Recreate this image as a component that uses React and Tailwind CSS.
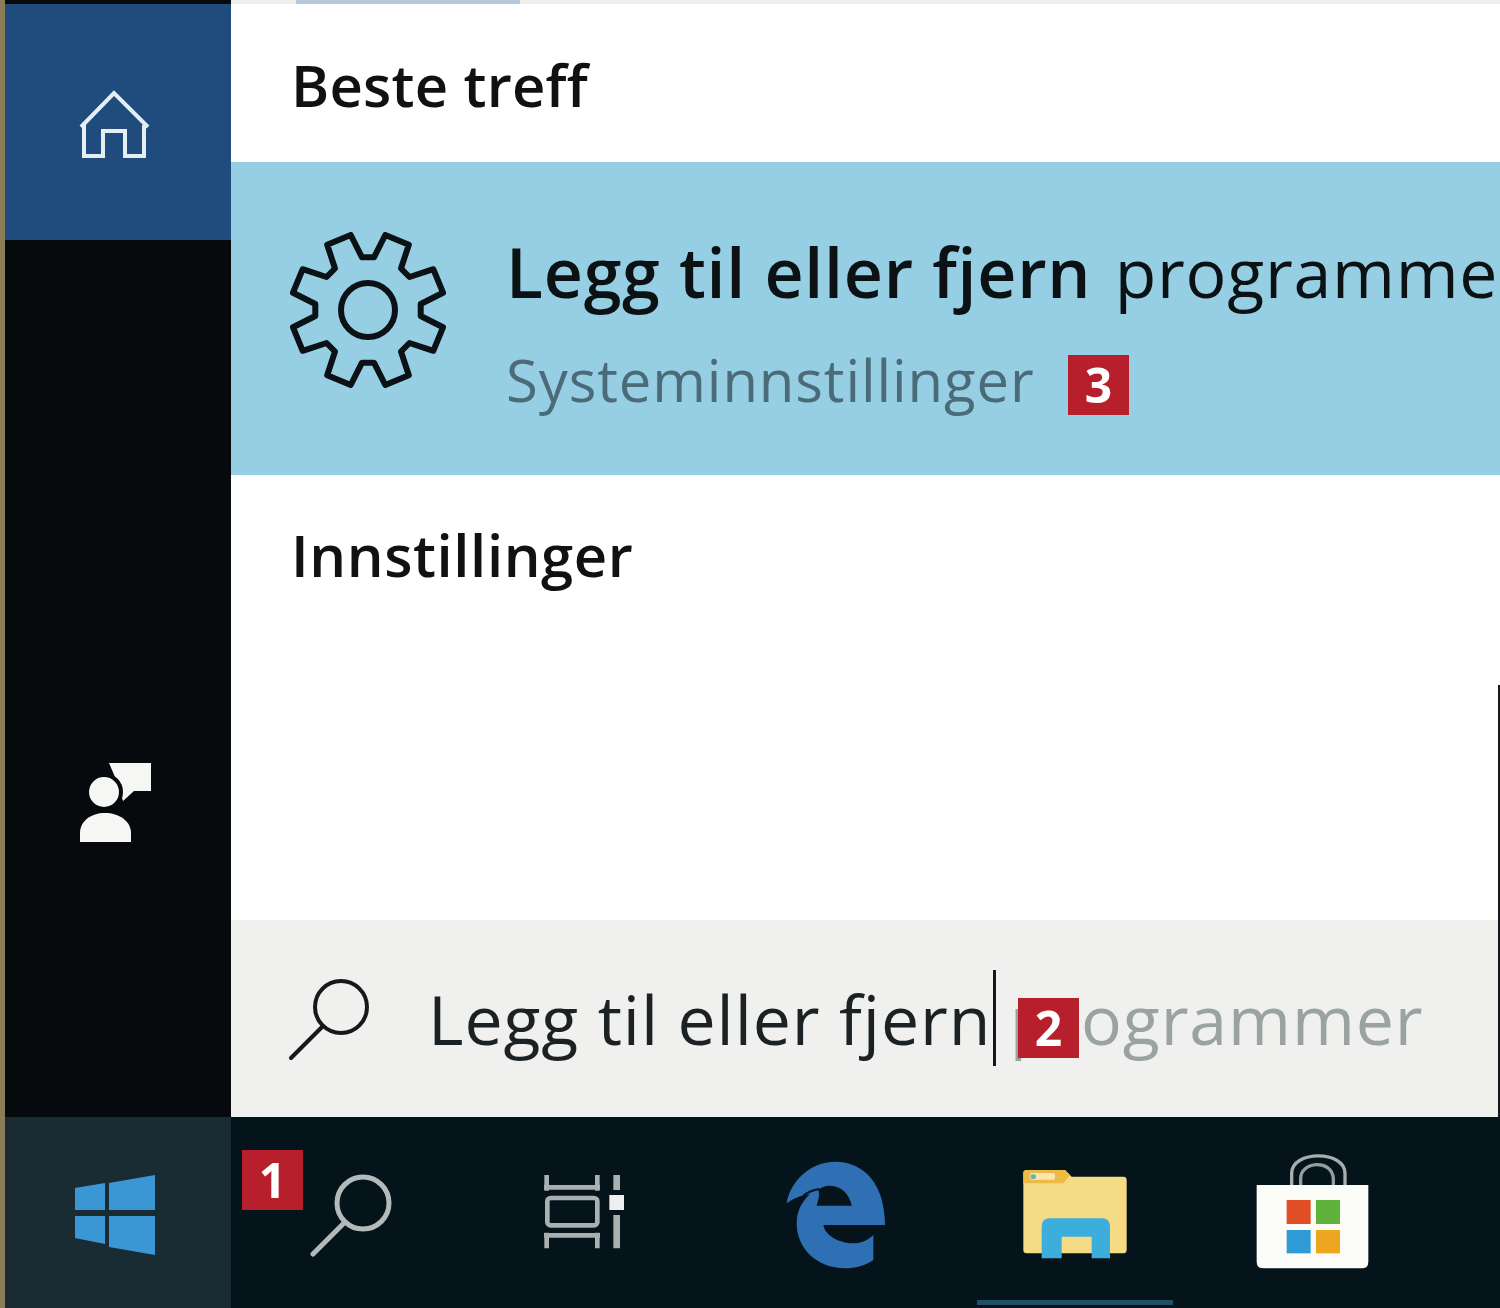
import React from 'react';

// 8-tooth settings gear, points worked out around the centre
function gearPoints(cx, cy, outer, inner) {
  const pts = [];
  for (let k = 0; k < 8; k++) {
    const a = 22.5 + 45 * k;
    [[-16, inner], [-9.5, outer], [9.5, outer], [16, inner]].forEach(([d, r]) => {
      const t = ((a + d - 90) * Math.PI) / 180;
      pts.push(`${(cx + r * Math.cos(t)).toFixed(1)},${(cy + r * Math.sin(t)).toFixed(1)}`);
    });
  }
  return pts.join(' ');
}

function Badge({ n, className }) {
  return (
    <div className={`absolute flex h-[60px] w-[61px] items-center justify-center bg-[#b81f2c] text-[48px] leading-none font-bold text-white ${className}`}>
      {n}
    </div>
  );
}

function HomeIcon() {
  return (
    <svg width="72" height="70" viewBox="0 0 72 70" fill="none" stroke="#e6eef5" strokeWidth="4">
      <path d="M2 37 L35 3 L69 37" />
      <path d="M5 35 V66 H24 V41 H46 V66 H65 V35" />
    </svg>
  );
}

function FeedbackIcon() {
  return (
    <svg width="72" height="80" viewBox="0 0 72 80">
      <path d="M30 0 H72 V28 H55 L44 38 L36 14 Z" fill="#f6f6f4" />
      <circle cx="25" cy="29" r="17" fill="#f6f6f4" stroke="#060a0c" strokeWidth="4" />
      <path d="M1 79 V70 C1 58 12 50 26 50 C40 50 52 58 52 70 V79 Z" fill="#f6f6f4" />
    </svg>
  );
}

function SearchGlyph({ color, size = 84, width = 4 }) {
  return (
    <svg width={size} height={size} viewBox="0 0 84 84" fill="none" stroke={color} strokeWidth={width}>
      <circle cx="54" cy="30" r="26" />
      <path d="M36 49 L4 81" strokeLinecap="round" />
    </svg>
  );
}

function WindowsLogo() {
  return (
    <svg width="80" height="80" viewBox="0 0 80 80" fill="#3a97d4">
      <path d="M0 13 L30 8 V35 H0 Z" />
      <path d="M34 8 L80 0 V35 H34 Z" />
      <path d="M0 41 H30 V69 L0 63 Z" />
      <path d="M34 41 H80 V80 L34 72 Z" />
    </svg>
  );
}

function TaskViewIcon() {
  return (
    <svg width="110" height="100" viewBox="0 0 330 300" fill="none" stroke="#a9b0b0" strokeWidth="14">
      <path d="M50 45 V92 M202 45 V92 M42 82 H210" />
      <rect x="52" y="114" width="150" height="82" rx="10" />
      <path d="M50 218 V265 M202 218 V265 M42 226 H210" />
      <path d="M260 45 V90 M260 165 V265" strokeWidth="20" />
      <rect x="238" y="105" width="44" height="45" fill="#eef0f0" stroke="none" />
    </svg>
  );
}

function EdgeIcon() {
  return (
    <svg width="130" height="135" viewBox="0 0 390 405">
      <path
        fill="#2f70b4"
        fillRule="evenodd"
        d="M50 175 C60 110 120 50 195 50 C285 50 345 120 345 240 H160 C165 270 205 295 250 295 C275 295 295 285 310 270 V345 C285 362 255 370 225 370 C140 370 80 310 80 235 C80 200 95 170 120 148 C90 150 65 165 50 175 Z M140 182 H245 C240 150 215 122 180 122 C165 122 150 128 145 135 C150 150 145 165 140 182 Z"
      />
      <path d="M148 132 C130 135 112 142 100 152" fill="none" stroke="#04141a" strokeWidth="6" />
    </svg>
  );
}

function FolderIcon() {
  return (
    <svg width="130" height="115" viewBox="0 0 390 345">
      <path d="M40 55 Q40 45 50 45 H165 L185 65 H340 Q350 65 350 75 V285 Q350 295 340 295 H50 Q40 295 40 285 Z" fill="#f6db86" />
      <path d="M40 55 Q40 45 50 45 H165 L180 60 L160 85 H40 Z" fill="#edba44" />
      <rect x="60" y="54" width="75" height="20" rx="6" fill="#f8e6ad" />
      <rect x="62" y="58" width="16" height="14" rx="5" fill="#5fb7b8" />
      <path d="M95 215 Q95 190 120 190 H275 Q300 190 300 215 V310 H245 V245 H155 V310 H95 Z" fill="#3caedb" />
    </svg>
  );
}

function StoreIcon() {
  return (
    <svg width="150" height="135" viewBox="0 0 450 405" fill="none">
      <path d="M155 125 V85 C155 15 315 15 315 85 V125" stroke="#a8aeae" strokeWidth="10" />
      <path d="M182 125 V100 C182 50 275 40 280 100 V125" stroke="#969d9d" strokeWidth="10" />
      <path d="M50 120 H385 V350 Q385 370 365 370 H70 Q50 370 50 350 Z" fill="#fbfbf8" />
      <rect x="140" y="165" width="72" height="72" fill="#e04e26" />
      <rect x="228" y="165" width="72" height="72" fill="#5fb23c" />
      <rect x="140" y="255" width="72" height="70" fill="#2f9bd6" />
      <rect x="228" y="255" width="72" height="70" fill="#eea520" />
    </svg>
  );
}

export default function App() {
  return (
    <div className="relative flex h-[1308px] w-[1500px] flex-col overflow-hidden bg-[#060a0c] font-['Open_Sans',sans-serif]">
      <div className="flex h-[1117px]">
        <div className="w-[5px] shrink-0 bg-[#8a7d55]"></div>

        {/* left rail */}
        <div className="flex w-[226px] shrink-0 flex-col pt-[4px]">
          <div className="flex h-[236px] items-center justify-center bg-[#1f4c7c] pt-[6px] pr-[7px] blur-[0.6px]">
            <HomeIcon />
          </div>
          <div className="flex justify-center pt-[523px] pr-[7px] blur-[0.5px]">
            <FeedbackIcon />
          </div>
        </div>

        {/* results panel */}
        <div className="relative flex min-w-0 flex-1 flex-col overflow-hidden bg-white">
          <div className="flex h-[4px] bg-[#eeeeea]">
            <div className="ml-[65px] w-[224px] bg-[#b8c8d8]"></div>
          </div>
          <div className="flex h-[158px] items-center pt-[2px] pl-[60px] text-[58px] font-semibold tracking-[0.2px] text-[#111] blur-[0.7px]">
            Beste treff
          </div>
          <div className="relative flex h-[313px] items-start gap-[58px] bg-[#96cfe4] pt-[68px] pl-[57px]">
            <svg width="160" height="160" viewBox="0 0 160 160" fill="none" stroke="#0b1114" strokeWidth="6" strokeLinejoin="round" className="shrink-0 blur-[0.5px]">
              <polygon points={gearPoints(80, 80, 77, 53)} />
              <circle cx="80" cy="80" r="27" />
            </svg>
            <div className="flex flex-col blur-[0.7px]">
              <div className="mt-[-3px] text-[68px] leading-[90px] tracking-[0.75px] whitespace-nowrap text-[#0c1214]">
                <span className="font-semibold">Legg til eller fjern</span> <span className="ml-[5px]">programmer</span>
              </div>
              <div className="mt-[25px] text-[58px] leading-[76px] tracking-[0.9px] whitespace-nowrap text-[#4c6b78]">
                Systeminnstillinger
              </div>
            </div>
            <Badge n="3" className="top-[193px] left-[837px] blur-[0.5px]" />
          </div>
          <div className="h-[445px] pt-[42px] pl-[60px]">
            <div className="text-[58px] leading-[76px] font-semibold tracking-[0.6px] text-[#111] blur-[0.7px]">
              Innstillinger
            </div>
          </div>
          <div className="relative flex h-[197px] items-center gap-[57px] bg-[#f0f0ee] pr-[4px] pl-[56px]">
            <SearchGlyph color="#15191b" />
            <div className="text-[68px] leading-[90px] tracking-[0.9px] whitespace-nowrap blur-[0.7px]">
              <span className="text-[#1c2224]">Legg til eller fjern</span>
              <span className="text-[#9aa2a2]"> programmer</span>
            </div>
            <div className="absolute top-[50px] left-[762px] h-[96px] w-[3px] bg-[#15191b]"></div>
            <Badge n="2" className="top-[78px] left-[787px] blur-[0.5px]" />
          </div>
          <div className="absolute top-[685px] right-0 bottom-0 w-[2px] bg-[#15191b]"></div>
        </div>
      </div>

      {/* taskbar */}
      <div className="relative flex h-[191px] bg-[#04141a]">
        <div className="w-[5px] shrink-0 bg-[#8a7d55]"></div>
        <div className="flex w-[226px] shrink-0 items-center justify-center bg-[#1a2c33] pt-[4px] pr-[7px] blur-[0.6px]">
          <WindowsLogo />
        </div>
        <div className="flex w-[240px] items-start justify-center pt-[56px] blur-[0.5px]">
          <SearchGlyph color="#b4baba" width={5} />
        </div>
        <div className="flex w-[240px] items-start justify-center pt-[43px] pr-[12px] blur-[0.5px]">
          <TaskViewIcon />
        </div>
        <div className="flex w-[240px] items-start justify-center pt-[28px] pl-[8px] blur-[0.5px]">
          <EdgeIcon />
        </div>
        <div className="relative flex w-[240px] items-start justify-center pt-[38px] pl-[8px] blur-[0.5px]">
          <FolderIcon />
          <div className="absolute bottom-[3px] left-[26px] h-[5px] w-[196px] bg-[#1e4f63]"></div>
        </div>
        <div className="flex w-[240px] items-start justify-center pt-[28px] pl-[8px] blur-[0.5px]">
          <StoreIcon />
        </div>
        <Badge n="1" className="top-[33px] left-[242px] blur-[0.5px]" />
      </div>
    </div>
  );
}
